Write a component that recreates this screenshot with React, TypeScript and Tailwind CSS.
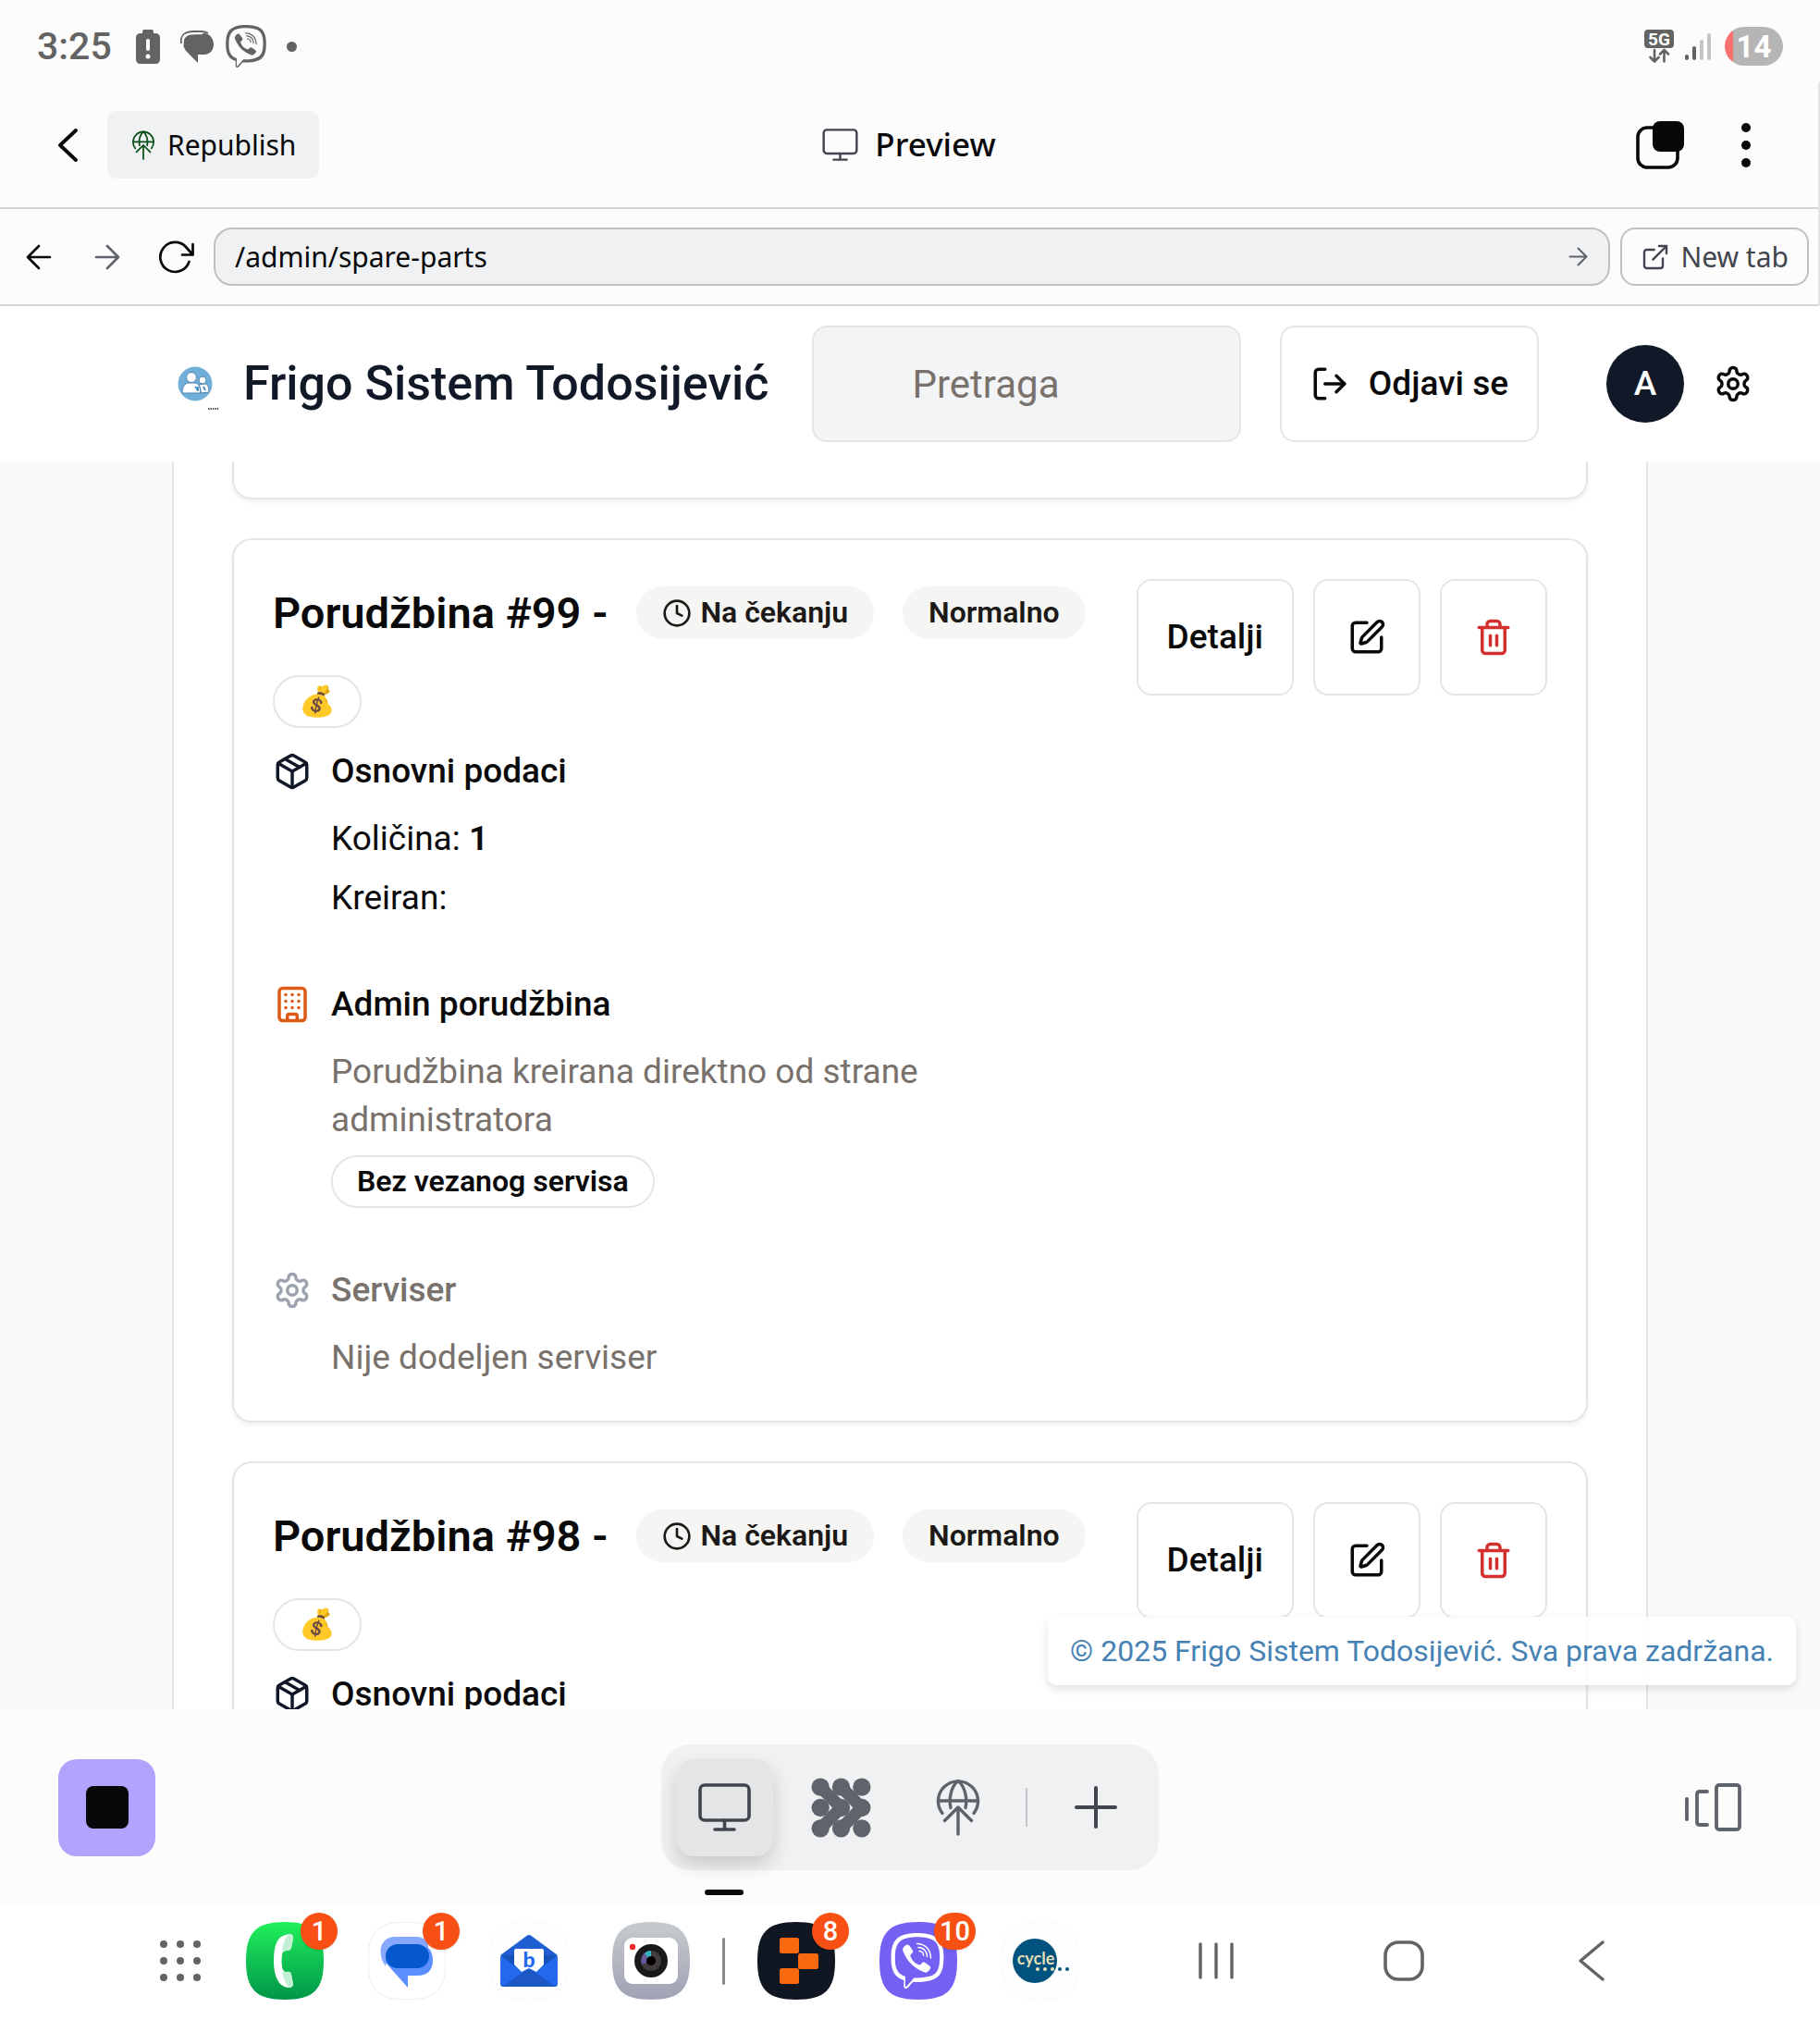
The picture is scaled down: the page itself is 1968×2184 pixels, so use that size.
import React from "react";
import { Building, Clock, ExternalLink, LogOut, Package, SquarePen, Trash2 } from "lucide-react";
import { FaViber } from "react-icons/fa";

type IconProps = { className?: string };

function GearIcon({ className }: IconProps) {
  return (
    <svg className={className} viewBox="0 0 24 24" fill="none" stroke="currentColor" strokeWidth="2" strokeLinecap="round" strokeLinejoin="round" aria-hidden="true">
      <path d="M12.22 2h-.44a2 2 0 0 0-2 2v.18a2 2 0 0 1-1 1.73l-.43.25a2 2 0 0 1-2 0l-.15-.08a2 2 0 0 0-2.73.73l-.22.38a2 2 0 0 0 .73 2.73l.15.1a2 2 0 0 1 1 1.72v.51a2 2 0 0 1-1 1.74l-.15.09a2 2 0 0 0-.73 2.73l.22.38a2 2 0 0 0 2.73.73l.15-.08a2 2 0 0 1 2 0l.43.25a2 2 0 0 1 1 1.73V20a2 2 0 0 0 2 2h.44a2 2 0 0 0 2-2v-.18a2 2 0 0 1 1-1.73l.43-.25a2 2 0 0 1 2 0l.15.08a2 2 0 0 0 2.73-.73l.22-.39a2 2 0 0 0-.73-2.73l-.15-.08a2 2 0 0 1-1-1.74v-.5a2 2 0 0 1 1-1.74l.15-.09a2 2 0 0 0 .73-2.73l-.22-.38a2 2 0 0 0-2.73-.73l-.15.08a2 2 0 0 1-2 0l-.43-.25a2 2 0 0 1-1-1.73V4a2 2 0 0 0-2-2z" />
      <circle cx="12" cy="12" r="3" />
    </svg>
  );
}

function PublishIcon({ className }: IconProps) {
  return (
    <svg className={className} viewBox="0 0 48 62" fill="none" stroke="currentColor" strokeWidth="3.4" strokeLinecap="round" strokeLinejoin="round" aria-hidden="true">
      <path d="M7 37.5A21.5 21.5 0 1 1 41 37.5" />
      <path d="M24 2.5C17 8 13.500 21 16 31.500M24 2.500C31 8 34.500 21 32 31.500" />
      <path d="M2.500 24h43M24 60V33M9.500 45.500L24 31l14.500 14.500" />
    </svg>
  );
}

function MonitorIcon({ className }: IconProps) {
  return (
    <svg className={className} viewBox="0 0 57 52" fill="none" stroke="currentColor" strokeWidth="3.6" strokeLinecap="round" aria-hidden="true">
      <rect x="2" y="2" width="53" height="38" rx="5" />
      <path d="M28.500 40v9M18 50h21" />
    </svg>
  );
}

function ArrowIcon({ className }: IconProps) {
  return (
    <svg className={className} viewBox="0 0 28 28" fill="none" stroke="currentColor" strokeWidth="2.700" strokeLinecap="round" strokeLinejoin="round" aria-hidden="true">
      <path d="M2 14h24M14 2l12 12-12 12" />
    </svg>
  );
}

function AgentIcon({ className }: IconProps) {
  const at = [10, 32, 54];
  return (
    <svg className={className} viewBox="0 0 64 64" fill="currentColor" aria-hidden="true">
      {at.map((y) => at.map((x) => <circle key={x + "-" + y} cx={x} cy={y} r="9.500" />))}
      <path d="M10 10l22 22-22 22M32 10l22 22-22 22" fill="none" stroke="currentColor" strokeWidth="13" strokeLinejoin="round" />
    </svg>
  );
}

function StatusBar() {
  return (
    <div className="flex h-[89px] shrink-0 items-center pt-[11px] pr-10 pl-10 text-[#636363]">
      <span className="text-[41px] leading-none font-medium">3:25</span>
      <svg className="ml-[26px] h-[37px] w-[26px]" viewBox="0 0 26 37" aria-hidden="true">
        <path fill="currentColor" d="M9 0h8q2 0 2 2v2h2q5 0 5 5v23q0 5-5 5H5q-5 0-5-5V9q0-5 5-5h2V2q0-2 2-2z" />
        <path stroke="#fcfcfc" strokeWidth="4" strokeLinecap="round" d="M13 12v9" />
        <circle cx="13" cy="29" r="2.500" fill="#fcfcfc" />
      </svg>
      <svg className="ml-[22px] h-[35px] w-[36px]" viewBox="0 0 36 35" aria-hidden="true">
        <path fill="currentColor" d="M3 13C2 5 9 3 16 3h10c5 0 10 5 10 12s-5 11-10 11h-7v9L6 22q-3-4-3-9z" />
        <path d="M1 14C-1 3 8 1 14 1h8q5 0 8 2" fill="none" stroke="currentColor" strokeWidth="1.800" />
        <path d="M3 15C2 5 9 3.500 16 3.500h8" fill="none" stroke="#fcfcfc" strokeWidth="1.500" />
      </svg>
      <FaViber className="ml-[12px] size-[46px]" aria-hidden="true" />
      <span className="ml-[21px] size-[11px] rounded-full bg-[#636363]" />
      <div className="ml-auto flex items-center gap-3">
        <div className="flex flex-col items-center">
          <span className="flex h-5 w-8 items-center justify-center rounded bg-[#636363] text-[19px] leading-none font-bold text-white">5G</span>
          <svg className="h-4 w-6" viewBox="0 0 24 16" fill="none" stroke="currentColor" strokeWidth="2.600" strokeLinecap="round" strokeLinejoin="round" aria-hidden="true">
            <path d="M7 2v12M2.500 10L7 14.500 11.500 10M17.500 14.500v-12M13 6.500L17.500 2 22 6.500" />
          </svg>
        </div>
        <svg className="h-[30px] w-[28px]" viewBox="0 0 28 30" strokeWidth="4" strokeLinecap="round" aria-hidden="true">
          <path d="M2 26v2M10 17v11" stroke="#636363" />
          <path d="M18 10v18M26 3v25" stroke="#c4c4c4" />
        </svg>
        <div className="ml-[3px] flex h-[42px] w-[63px] items-center justify-center rounded-full bg-gradient-to-r from-[#f8716c] from-15% to-[#b5b5b5] to-15% text-[33px] leading-none font-bold text-white">14</div>
      </div>
    </div>
  );
}

function PreviewHeader() {
  return (
    <header className="grid h-[137px] shrink-0 grid-cols-[1fr_auto_1fr] items-center border-b-2 border-[#d3d3d4] font-['Noto_Sans',sans-serif] text-[#07080a]">
      <div className="flex items-center">
        <button type="button" aria-label="Back" className="flex w-[116px] justify-start pl-[62px]">
          <svg className="h-[36px] w-[22px]" viewBox="0 0 22 36" fill="none" stroke="currentColor" strokeWidth="3.800" strokeLinecap="round" strokeLinejoin="round" aria-hidden="true">
            <path d="M20 2L3 18l17 16" />
          </svg>
        </button>
        <button type="button" className="flex h-[73px] items-center gap-3 rounded-[10px] bg-[#f0f1f3] px-[25px] text-[30px]">
          <PublishIcon className="h-[32px] w-[28px] text-[#0a4f17]" />
          Republish
        </button>
      </div>
      <h1 className="flex items-center gap-[18px] text-[35px] font-medium">
        <MonitorIcon className="h-[35px] w-[39px] text-[#42454d]" />
        Preview
      </h1>
      <div className="flex items-center justify-end gap-[60px] pr-[71px]">
        <button type="button" aria-label="Windows">
          <svg className="size-[52px]" viewBox="0 0 52 52" aria-hidden="true">
            <rect x="2" y="7" width="43" height="43" rx="10" fill="none" stroke="currentColor" strokeWidth="3.600" />
            <rect x="18" y="0" width="34" height="33" rx="8" fill="currentColor" />
          </svg>
        </button>
        <button type="button" aria-label="More" className="flex flex-col gap-[9px] px-[2px]">
          <span className="size-[10px] rounded-full bg-[#07080a]" />
          <span className="size-[10px] rounded-full bg-[#07080a]" />
          <span className="size-[10px] rounded-full bg-[#07080a]" />
        </button>
      </div>
    </header>
  );
}

function AddressBar() {
  return (
    <nav className="flex h-[105px] shrink-0 items-center border-b-2 border-[#d3d3d4] pr-[10px] pl-7 font-['Noto_Sans',sans-serif] text-[30px] text-[#07080a]">
      <button type="button" aria-label="Go back"><ArrowIcon className="size-[28px] rotate-180" /></button>
      <button type="button" aria-label="Go forward" className="ml-[46px] text-[#5f636b]"><ArrowIcon className="size-[28px]" /></button>
      <button type="button" aria-label="Reload" className="ml-[41px]">
        <svg className="h-[36px] w-[40px]" viewBox="0 0 40 36" fill="none" stroke="currentColor" strokeWidth="2.700" strokeLinecap="round" strokeLinejoin="round" aria-hidden="true">
          <path d="M33.500 23A16 16 0 1 1 30 7l7.500 8.500M37.500 4v11.500H26" />
        </svg>
      </button>
      <form className="ml-5 flex h-[63px] flex-1 items-center rounded-[20px] border-2 border-[#bfc0c3] bg-[#f0f1f3] pr-[22px] pl-[21px]">
        <input aria-label="Path" className="min-w-0 flex-1 bg-transparent outline-none" defaultValue="/admin/spare-parts" />
        <button type="button" aria-label="Go" className="text-[#5f636b]"><ArrowIcon className="size-[21px]" /></button>
      </form>
      <button type="button" className="ml-[11px] flex h-[63px] items-center gap-[11px] rounded-[16px] border-2 border-[#bfc0c3] px-[20px] text-[#42454d]">
        <ExternalLink className="size-[32px]" strokeWidth={1.800} />
        New tab
      </button>
    </nav>
  );
}

function SiteHeader() {
  return (
    <header className="flex h-[168px] shrink-0 items-center bg-white pr-[73px] pl-[191px] text-[#0a0a0a]">
      <svg className="mr-5 h-[56px] w-[52px] shrink-0" viewBox="0 0 52 56" aria-hidden="true">
        <circle cx="20" cy="28" r="18.500" fill="#72afd8" />
        <path d="M6 38c0-7 3-11 7-11h6c5 0 7 4 7 11zM26 38c0-4-1-7-2-9l6-1c4 0 5 4 5 9z" fill="#fff" stroke="#4b84ad" />
        <circle cx="16" cy="21" r="5.500" fill="#fff" stroke="#4b84ad" />
        <circle cx="28" cy="24" r="4" fill="#fff" stroke="#4b84ad" />
        <path d="M20 31l3 4m0-4v5M29 31l2 4" stroke="#4b95c8" strokeWidth="2" />
        <path d="M34 55h6M41 55h5" stroke="#111827" strokeWidth="1.500" strokeDasharray="1.500 1" />
      </svg>
      <span className="text-[52px] font-medium whitespace-nowrap text-[#111827]">Frigo Sistem Todosijević</span>
      <input type="search" aria-label="Pretraga" placeholder="Pretraga" className="ml-[47px] h-[126px] min-w-0 flex-1 rounded-[16px] border-2 border-[#e5e5e5] bg-[#f3f4f6] px-[106px] text-[42px] placeholder:text-[#78716c]" />
      <button type="button" className="ml-[42px] flex h-[126px] items-center gap-[21px] rounded-[16px] border-2 border-[#e5e5e5] px-[31px] text-[37px] font-medium whitespace-nowrap">
        <LogOut className="size-[42px]" />
        Odjavi se
      </button>
      <button type="button" className="ml-[73px] size-[84px] rounded-full bg-[#111827] text-[37px] font-medium text-white">A</button>
      <button type="button" aria-label="Podešavanja" className="ml-8"><GearIcon className="size-[42px]" /></button>
    </header>
  );
}

function Badge({ outline, children }: { outline?: boolean; children: React.ReactNode }) {
  return (
    <span className={"inline-flex items-center gap-[9px] rounded-full border-2 px-[26px] py-[6px] text-[32px] leading-[41px] font-semibold whitespace-nowrap " + (outline ? "border-[#e5e5e5]" : "border-transparent bg-[#f5f5f4] text-[#1c1917]")}>
      {children}
    </span>
  );
}

function Section({ icon, title, muted, children }: { icon: React.ReactNode; title: string; muted?: boolean; children: React.ReactNode }) {
  return (
    <section className={muted ? "text-[#78716c]" : ""}>
      <h3 className="flex items-center gap-[21px] font-medium">{icon}{title}</h3>
      <div className="mt-[21px] flex flex-col items-start gap-[12px] pl-[63px]">{children}</div>
    </section>
  );
}

function OrderCard({ number, adminOrder }: { number: number; adminOrder?: boolean }) {
  const action = "flex h-[126px] items-center rounded-[16px] border-2 border-[#e5e5e5]";
  return (
    <article className="flex items-start gap-[42px] rounded-[21px] border-2 border-[#e5e5e5] bg-white p-[42px] text-[37px] leading-[52px] text-[#0a0a0a] shadow-[0_3px_5px_rgba(0,0,0,0.06)]">
      <div className="min-w-0 flex-1">
        <div className="flex flex-wrap items-center gap-[31px]">
          <h2 className="text-[47px] leading-[73px] font-semibold">Porudžbina #{number} -</h2>
          <Badge><Clock className="size-[32px]" />Na čekanju</Badge>
          <Badge>Normalno</Badge>
          <Badge outline><span role="img" aria-label="Novac" className="font-['Noto_Color_Emoji',sans-serif]">💰</span></Badge>
        </div>
        <div className="mt-[21px] flex flex-col gap-[63px]">
          <Section icon={<Package className="size-[42px] text-[#111827]" />} title="Osnovni podaci">
            <p>Količina: <strong className="font-semibold">1</strong></p>
            <p>Kreiran:</p>
          </Section>
          {adminOrder && (
            <>
              <Section icon={<Building className="size-[42px] text-[#dc5a14]" />} title="Admin porudžbina">
                <p className="text-[#78716c]">Porudžbina kreirana direktno od strane administratora</p>
                <Badge outline>Bez vezanog servisa</Badge>
              </Section>
              <Section muted icon={<GearIcon className="size-[42px] text-[#9ca3af]" />} title="Serviser">
                <p>Nije dodeljen serviser</p>
              </Section>
            </>
          )}
        </div>
      </div>
      <div className="flex gap-[21px] font-medium">
        <button type="button" className={action + " px-[31px]"}>Detalji</button>
        <button type="button" aria-label="Izmeni" className={action + " px-[35px]"}><SquarePen className="size-[42px]" /></button>
        <button type="button" aria-label="Obriši" className={action + " px-[35px] text-[#d32f2f]"}><Trash2 className="size-[42px]" /></button>
      </div>
    </article>
  );
}

function Toolbar() {
  return (
    <div className="grid h-[210px] shrink-0 grid-cols-[1fr_auto_1fr] items-center px-[63px] pt-[2px]">
      <button type="button" aria-label="Stop" className="flex size-[105px] items-center justify-center rounded-[20px] bg-[#b2a3ff]">
        <span className="size-[46px] rounded-lg bg-[#07080a]" />
      </button>
      <div className="flex h-[136px] items-center rounded-[32px] bg-[#f0f1f3] px-4 text-[#5f636b]">
        <button type="button" aria-label="Preview" aria-current="page" className="relative flex size-[105px] items-center justify-center rounded-[20px] bg-[#e4e5e7] text-[#42454d] shadow-[0_10px_20px_rgba(0,0,0,0.16)]">
          <MonitorIcon className="h-[52px] w-[57px]" />
          <span className="absolute -bottom-[42px] left-[31px] h-[6px] w-[42px] rounded-full bg-[#07080a]" />
        </button>
        <button type="button" aria-label="Agent" className="ml-[21px] flex size-[105px] items-center justify-center"><AgentIcon className="size-[65px]" /></button>
        <button type="button" aria-label="Publish" className="ml-[21px] flex size-[105px] items-center justify-center"><PublishIcon className="h-[62px] w-[48px]" /></button>
        <span className="ml-[21px] h-[42px] w-[2px] bg-[#c4c5c8]" />
        <button type="button" aria-label="Add tab" className="ml-[21px] flex size-[105px] items-center justify-center text-[#42454d]">
          <svg className="size-[46px]" viewBox="0 0 46 46" stroke="currentColor" strokeWidth="4" strokeLinecap="round" aria-hidden="true"><path d="M2 23h42M23 2v42" /></svg>
        </button>
      </div>
      <button type="button" aria-label="All tabs" className="mr-[22px] justify-self-end text-[#5f636b]">
        <svg className="h-[52px] w-[61px]" viewBox="0 0 61 52" fill="none" stroke="currentColor" strokeWidth="3.800" strokeLinecap="round" strokeLinejoin="round" aria-hidden="true">
          <rect x="34" y="2" width="25" height="48" rx="3" />
          <path d="M24 9h-8q-3 0-3 3v30q0 3 3 3h8M2 17v22" />
        </svg>
      </button>
    </div>
  );
}

const SQUIRCLE = "M42 0C73 0 84 11 84 42S73 84 42 84 0 73 0 42 11 0 42 0Z";

function AppTile({ name, count, children }: { name: string; count?: number; children: React.ReactNode }) {
  return (
    <button type="button" aria-label={name} className="relative size-[84px]">
      <svg className="size-full" viewBox="0 0 84 84" aria-hidden="true">{children}</svg>
      {count !== undefined && (
        <span className="absolute -top-[10px] left-[59px] flex h-10 min-w-10 items-center justify-center rounded-full bg-[#f84f14] px-[6px] text-[29px] leading-none font-medium text-white shadow-sm">{count}</span>
      )}
    </button>
  );
}

function Taskbar() {
  const dots = [4, 22, 40];
  return (
    <footer className="flex h-[126px] shrink-0 items-center bg-white pr-[146px] pb-[2px] pl-[173px] text-[#636363]">
      <button type="button" aria-label="Apps">
        <svg className="size-[44px]" viewBox="0 0 44 44" fill="currentColor" aria-hidden="true">
          {dots.map((y) => dots.map((x) => <circle key={x + "-" + y} cx={x} cy={y} r="4" />))}
        </svg>
      </button>
      <div className="ml-[49px] flex items-center gap-12">
        <AppTile name="Phone" count={1}>
          <defs><linearGradient id="phone" x2="0" y2="1"><stop stopColor="#20f05a" /><stop offset="1" stopColor="#00954a" /></linearGradient></defs>
          <path d={SQUIRCLE} fill="url(#phone)" />
          <path fill="#fff" d="M43 14C48 12 51 13 51 17L49 28Q48 31 44 31Q40 31 39 35Q38 42 39 49Q40 54 44 54Q48 53 49 57L51 67Q51 71 45 71Q30 68 30 42Q30 16 43 14z" />
          <path fill="#c3f0d5" d="M46 13Q51 13 51 17L49 28Q48 31 44 31L39 32Q40 20 46 13zM39 54L44 54Q48 53 49 57L51 67Q51 71 46 71Q41 64 39 54z" />
        </AppTile>
        <AppTile name="Messages" count={1}>
          <path d={SQUIRCLE} fill="#fff" stroke="#ececec" />
          <path fill="#86a8ff" d="M29 16H53Q62 16 65 26V38H20L19 48Q13.500 41 13.500 31A15 15 0 0 1 29 16z" />
          <path fill="#5b8fff" d="M64 27Q70 32 70 41Q70 58 53 58H43V71L19 44V36z" />
          <rect x="19" y="24" width="47" height="26" rx="13" fill="#0457cd" />
        </AppTile>
        <AppTile name="Mail">
          <path d={SQUIRCLE} fill="#fefefe" stroke="#f9f9f9" />
          <path fill="#1f5ed0" d="M39.500 15Q42 13 44.500 15L73 36H11z" />
          <rect x="11" y="36" width="62" height="34" rx="3" fill="#2369ee" />
          <path fill="#1650b8" d="M11 36h15l8 17zM73 36H58l-8 17z" />
          <path fill="#fff" d="M26 31q0-2 2-2h28q2 0 2 2v15L50 54 42 50 34 54 26 46z" />
          <path fill="#1c57c4" d="M13 70L39 52q3-2 6 0l26 18z" />
          <text x="42" y="49" textAnchor="middle" fontFamily="Lato, sans-serif" fontWeight="900" fontSize="23" fill="#2369ee">b</text>
        </AppTile>
        <AppTile name="Camera">
          <defs><linearGradient id="camera" x2="0" y2="1"><stop stopColor="#c5cccd" /><stop offset="1" stopColor="#9fa2b3" /></linearGradient></defs>
          <path d={SQUIRCLE} fill="url(#camera)" />
          <rect x="13" y="17" width="58" height="50" rx="9" fill="#fff" />
          <circle cx="22" cy="27" r="3.200" fill="#ef2b2d" />
          <circle cx="42" cy="42" r="18" fill="#19191b" />
          <circle cx="42" cy="42" r="11" fill="#403b3e" />
          <path fill="#65599b" d="M42 42V31A11 11 0 0 0 32 46z" />
          <path fill="#32b5c4" d="M42 42V31A11 11 0 0 0 35 34z" />
          <circle cx="42" cy="42" r="5" fill="#000" />
        </AppTile>
      </div>
      <span className="mx-[35px] h-[51px] w-[3px] rounded-full bg-[#8a8a8a]" />
      <div className="flex items-center gap-12">
        <AppTile name="Replit" count={8}>
          <path d={SQUIRCLE} fill="#101722" />
          <g fill="#f8680f">
            <rect x="24" y="17" width="21" height="17" rx="2.500" />
            <rect x="44" y="34" width="22" height="17" rx="2.500" />
            <rect x="24" y="50" width="21" height="17" rx="2.500" />
          </g>
        </AppTile>
        <AppTile name="Viber" count={10}>
          <path d={SQUIRCLE} fill="#7460f2" />
          <FaViber x={11} y={12} size={60} color="#fff" />
        </AppTile>
        <AppTile name="Cycle">
          <path d={SQUIRCLE} fill="#fefefe" stroke="#f9f9f9" />
          <circle cx="36" cy="42" r="24" fill="#00527f" />
          <text x="37" y="46" textAnchor="middle" fontFamily="Lato, sans-serif" fontWeight="700" fontSize="18" fill="#e6dfb5">cycle</text>
          <g fill="#e6dfb5"><circle cx="39" cy="51" r="2" /><circle cx="47" cy="51" r="2" /><circle cx="55" cy="51" r="2" /></g>
          <g fill="#00527f"><circle cx="63" cy="51" r="2" /><circle cx="71" cy="51" r="2" /></g>
        </AppTile>
      </div>
      <div className="ml-auto grid grid-cols-[203px_203px_203px] justify-items-center">
        <button type="button" aria-label="Recents">
          <svg className="h-[42px] w-[40px]" viewBox="0 0 40 42" stroke="currentColor" strokeWidth="3.400" strokeLinecap="round" aria-hidden="true"><path d="M3 3v36M20 3v36M37 3v36" /></svg>
        </button>
        <button type="button" aria-label="Home">
          <svg className="size-[44px]" viewBox="0 0 44 44" fill="none" stroke="currentColor" strokeWidth="3.600" aria-hidden="true"><rect x="2" y="2" width="40" height="40" rx="14" /></svg>
        </button>
        <button type="button" aria-label="Back">
          <svg className="h-[44px] w-[28px]" viewBox="0 0 28 44" fill="none" stroke="currentColor" strokeWidth="3.400" strokeLinecap="round" strokeLinejoin="round" aria-hidden="true"><path d="M26 2L2 22l24 20" /></svg>
        </button>
      </div>
    </footer>
  );
}

export default function App() {
  return (
    <div className="flex h-screen w-full flex-col overflow-hidden bg-[#fcfcfc] font-['Roboto',sans-serif]">
      <StatusBar />
      <div className="shrink-0 border-r-2 border-[#e4e4e5]">
        <PreviewHeader />
        <AddressBar />
      </div>
      <SiteHeader />
      <main className="relative min-h-0 flex-1 overflow-hidden bg-[#f8fafc]">
        <div className="mx-[186px] flex flex-col gap-[42px] border-x-2 border-[#e5e5e5] bg-white px-[63px]">
          <div className="h-[41px] rounded-b-[21px] border-x-2 border-b-2 border-[#e5e5e5] shadow-[0_3px_5px_rgba(0,0,0,0.06)]" />
          <OrderCard number={99} adminOrder />
          <OrderCard number={98} />
        </div>
        <p className="absolute right-[26px] bottom-[26px] rounded-[10px] bg-white/90 px-6 py-4 text-[32px] leading-[42px] text-[#4682b4] shadow-[0_4px_10px_rgba(0,0,0,0.12)]">
          © 2025 Frigo Sistem Todosijević. Sva prava zadržana.
        </p>
      </main>
      <Toolbar />
      <Taskbar />
    </div>
  );
}
